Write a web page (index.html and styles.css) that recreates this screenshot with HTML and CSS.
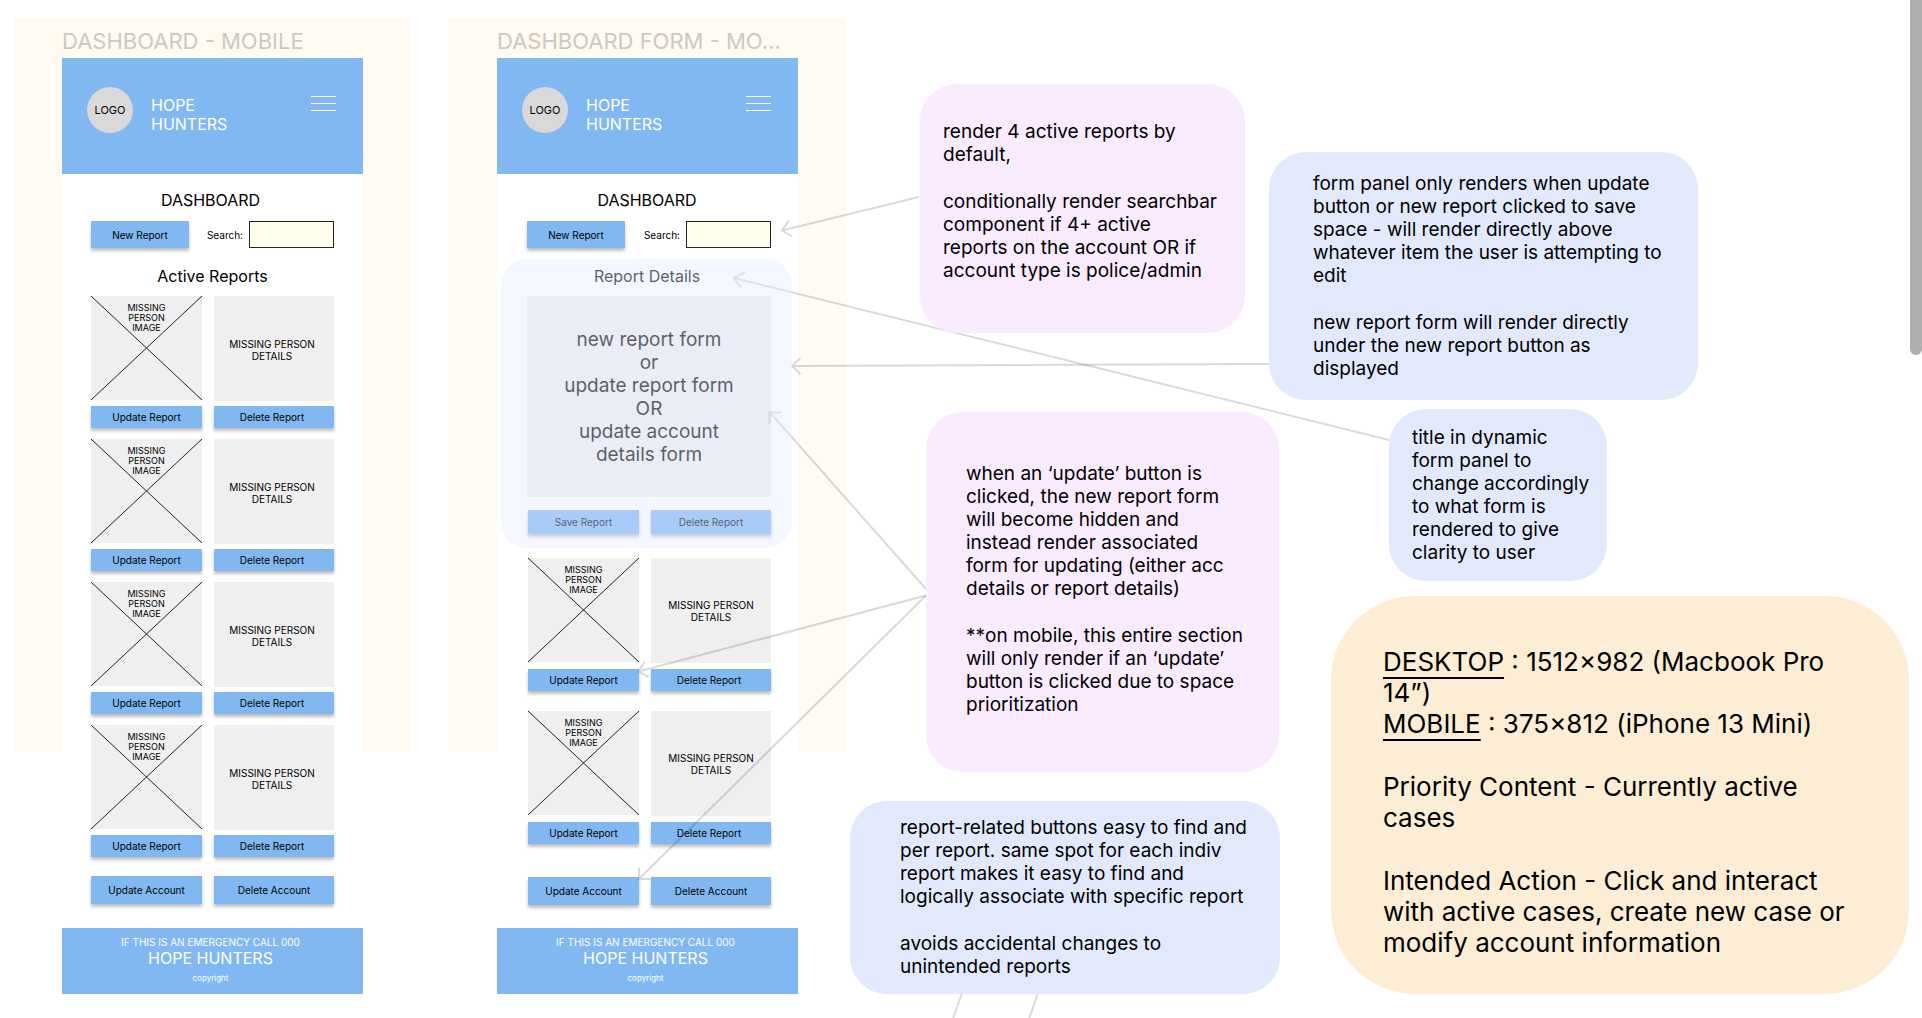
FILE: index.html
```html
<!DOCTYPE html>
<html lang="en">
<head>
<meta charset="utf-8">
<meta name="viewport" content="width=device-width, initial-scale=1">
<title>Hope Hunters wireframes</title>
<link rel="stylesheet" href="styles.css">
</head>
<body>
<main class="canvas">

  <section class="board board-dashboard">
    <h2 class="board-name">DASHBOARD - MOBILE</h2>
    <div class="phone">
      <header class="phone-header">
        <div class="logo">LOGO</div>
        <p class="brand">HOPE<br>HUNTERS</p>
        <button class="menu" type="button" aria-label="Menu"><span></span><span></span><span></span></button>
      </header>
      <div class="phone-body">
        <h3 class="title title-page">DASHBOARD</h3>
        <div class="toolbar">
          <button class="btn btn-new" type="button">New Report</button>
          <label for="search-a">Search:</label>
          <input id="search-a" class="search" type="text">
        </div>
        <h3 class="title title-section">Active Reports</h3>
        <div class="reports">
          <article class="report">
            <div class="photo"><svg viewBox="0 0 111 104" preserveAspectRatio="none" aria-hidden="true"><path d="M0 0L111 104M111 0L0 104"/></svg><p>MISSING<br>PERSON<br>IMAGE</p></div>
            <div class="details">MISSING PERSON<br>DETAILS</div>
            <button class="btn" type="button">Update Report</button>
            <button class="btn btn-right" type="button">Delete Report</button>
          </article>
          <article class="report">
            <div class="photo"><svg viewBox="0 0 111 104" preserveAspectRatio="none" aria-hidden="true"><path d="M0 0L111 104M111 0L0 104"/></svg><p>MISSING<br>PERSON<br>IMAGE</p></div>
            <div class="details">MISSING PERSON<br>DETAILS</div>
            <button class="btn" type="button">Update Report</button>
            <button class="btn btn-right" type="button">Delete Report</button>
          </article>
          <article class="report">
            <div class="photo"><svg viewBox="0 0 111 104" preserveAspectRatio="none" aria-hidden="true"><path d="M0 0L111 104M111 0L0 104"/></svg><p>MISSING<br>PERSON<br>IMAGE</p></div>
            <div class="details">MISSING PERSON<br>DETAILS</div>
            <button class="btn" type="button">Update Report</button>
            <button class="btn btn-right" type="button">Delete Report</button>
          </article>
          <article class="report">
            <div class="photo"><svg viewBox="0 0 111 104" preserveAspectRatio="none" aria-hidden="true"><path d="M0 0L111 104M111 0L0 104"/></svg><p>MISSING<br>PERSON<br>IMAGE</p></div>
            <div class="details">MISSING PERSON<br>DETAILS</div>
            <button class="btn" type="button">Update Report</button>
            <button class="btn btn-right" type="button">Delete Report</button>
          </article>
        </div>
        <div class="account">
          <button class="btn" type="button">Update Account</button>
          <button class="btn" type="button">Delete Account</button>
        </div>
      </div>
      <footer class="phone-footer">
        <p class="emergency">IF THIS IS AN EMERGENCY CALL 000</p>
        <p class="footer-brand">HOPE HUNTERS</p>
        <p class="copyright">copyright</p>
      </footer>
    </div>
  </section>

  <section class="board board-form">
    <h2 class="board-name">DASHBOARD FORM - MO…</h2>
    <div class="phone">
      <header class="phone-header">
        <div class="logo">LOGO</div>
        <p class="brand">HOPE<br>HUNTERS</p>
        <button class="menu" type="button" aria-label="Menu"><span></span><span></span><span></span></button>
      </header>
      <div class="phone-body">
        <h3 class="title title-page">DASHBOARD</h3>
        <div class="toolbar">
          <button class="btn btn-new" type="button">New Report</button>
          <label for="search-b">Search:</label>
          <input id="search-b" class="search" type="text">
        </div>
        <h3 class="title title-section">Report Details</h3>
        <div class="form-area">new report form<br>or<br>update report form<br>OR<br>update account<br>details form</div>
        <div class="form-actions">
          <button class="btn" type="button">Save Report</button>
          <button class="btn" type="button">Delete Report</button>
        </div>
        <div class="reports">
          <article class="report">
            <div class="photo"><svg viewBox="0 0 111 104" preserveAspectRatio="none" aria-hidden="true"><path d="M0 0L111 104M111 0L0 104"/></svg><p>MISSING<br>PERSON<br>IMAGE</p></div>
            <div class="details">MISSING PERSON<br>DETAILS</div>
            <button class="btn" type="button">Update Report</button>
            <button class="btn btn-right" type="button">Delete Report</button>
          </article>
          <article class="report">
            <div class="photo"><svg viewBox="0 0 111 104" preserveAspectRatio="none" aria-hidden="true"><path d="M0 0L111 104M111 0L0 104"/></svg><p>MISSING<br>PERSON<br>IMAGE</p></div>
            <div class="details">MISSING PERSON<br>DETAILS</div>
            <button class="btn" type="button">Update Report</button>
            <button class="btn btn-right" type="button">Delete Report</button>
          </article>
        </div>
        <div class="account">
          <button class="btn" type="button">Update Account</button>
          <button class="btn" type="button">Delete Account</button>
        </div>
      </div>
      <footer class="phone-footer">
        <p class="emergency">IF THIS IS AN EMERGENCY CALL 000</p>
        <p class="footer-brand">HOPE HUNTERS</p>
        <p class="copyright">copyright</p>
      </footer>
    </div>
  </section>

  <svg class="connectors" width="1400" height="1018" aria-hidden="true">
    <path d="M919 197L782 230.500M789 220.500L782 230.500L792 236.500"/>
    <path d="M1389 440L734 278M745 272L734 278L741 287.500"/>
    <path d="M1269 364L792 366M800.500 358L792 366L800.500 374"/>
    <path d="M926 589L769.500 412M781.500 412.700L769.500 412L769.500 423.500"/>
    <path d="M926 595.500L638.500 671.500M644.500 662L638.500 671.500L648.500 677"/>
    <path d="M926 595.500L639 879M639 867.500L639 879L650.500 879"/>
    <path d="M962 993L953 1019"/>
    <path d="M1038 993L1029 1019"/>
  </svg>
  <div class="form-highlight"></div>

  <aside class="note pink note-search">
    <p>render 4 active reports by<br>default,</p>
    <p>conditionally render searchbar<br>component if 4+ active<br>reports on the account OR if<br>account type is police/admin</p>
  </aside>
  <aside class="note blue note-panel">
    <p>form panel only renders when update<br>button or new report clicked to save<br>space - will render directly above<br>whatever item the user is attempting to<br>edit</p>
    <p>new report form will render directly<br>under the new report button as<br>displayed</p>
  </aside>
  <aside class="note blue note-title">
    <p>title in dynamic<br>form panel to<br>change accordingly<br>to what form is<br>rendered to give<br>clarity to user</p>
  </aside>
  <aside class="note pink note-update">
    <p>when an ‘update’ button is<br>clicked, the new report form<br>will become hidden and<br>instead render associated<br>form for updating (either acc<br>details or report details)</p>
    <p>**on mobile, this entire section<br>will only render if an ‘update’<br>button is clicked due to space<br>prioritization</p>
  </aside>
  <aside class="note blue note-buttons">
    <p>report-related buttons easy to find and<br>per report. same spot for each indiv<br>report makes it easy to find and<br>logically associate with specific report</p>
    <p>avoids accidental changes to<br>unintended reports</p>
  </aside>
  <aside class="note orange note-sizes">
    <p><u>DESKTOP</u> : 1512×982 (Macbook Pro<br>14”)<br><u>MOBILE</u> : 375×812 (iPhone 13 Mini)</p>
    <p>Priority Content - Currently active<br>cases</p>
    <p>Intended Action - Click and interact<br>with active cases, create new case or<br>modify account information</p>
  </aside>

  <div class="scroll-thumb"></div>
</main>
</body>
</html>
```
FILE: styles.css
```css
* { box-sizing: border-box; }

body {
  margin: 0;
  background: #fff;
  color: #000;
  font-family: Inter, "Liberation Sans", sans-serif;
}

h2, h3, p { margin: 0; font-weight: 400; }

.canvas {
  position: relative;
  min-height: 100vh;
  overflow: hidden;
}

/* Artboards placed on the free canvas */
.board {
  position: absolute;
  top: 18px;
  display: flex;
  flex-direction: column;
  gap: 3px;
  background: linear-gradient(#fffaf2, #fffaf2) 0 0 / 100% 734px no-repeat;
}
.board-dashboard { left: 14px; width: 397px; padding: 9px 48px 0; }
.board-form { left: 448px; width: 398px; padding: 9px 48px 0 49px; }

.board-name {
  color: #cdc9c2;
  font-size: 22px;
  line-height: 28px;
  white-space: nowrap;
}

.phone { background: #fff; }

.phone-header {
  display: flex;
  align-items: flex-start;
  height: 116px;
  padding: 29px 27px 0 25px;
  background: #81b8f2;
}
.logo {
  display: grid;
  place-items: center;
  width: 46px;
  height: 46px;
  border-radius: 50%;
  background: #d9d9d9;
  font-size: 11px;
}
.brand {
  margin: 9px auto 0 18px;
  color: #fff;
  font-size: 16px;
  line-height: 19px;
}
.menu {
  display: flex;
  flex-direction: column;
  gap: 6px;
  width: 25px;
  margin-top: 9px;
  padding: 0;
  border: 0;
  background: none;
}
.menu span { width: 100%; height: 1px; background: #fff; }

.phone-body {
  display: flex;
  flex-direction: column;
  padding: 17px 29px 24px;
}
.board-form .phone-body { padding: 17px 27px 23px 30px; }

.title {
  font-size: 16px;
  line-height: 19px;
  text-align: center;
}
.title-page, .board-form .title { padding-right: 4px; }
.title-section { margin: 19px 0 10px; }

.toolbar {
  display: flex;
  align-items: center;
  height: 27px;
  margin-top: 11px;
  font-size: 10px;
}
.toolbar label { margin: 0 6px 0 auto; }
.search {
  width: 85px;
  height: 27px;
  padding: 0 4px;
  border: 1px solid #222;
  background: #ffffeb;
}

.btn {
  height: 22px;
  padding: 0;
  border: 0;
  background: #81b8f2;
  box-shadow: 0 3px 3px rgba(0, 0, 0, .25);
  color: #000;
  font: 10px/12px Inter, "Liberation Sans", sans-serif;
}
.btn-new { width: 98px; height: 27px; }
.btn-right { padding-right: 4px; }

.reports { display: grid; gap: 11px; }
.board-form .reports { gap: 20px; margin-top: 24px; }

.report, .account, .form-actions {
  display: grid;
  grid-template-columns: 111px 120px;
  column-gap: 12px;
  row-gap: 5px;
}
.board-form .report { row-gap: 6px; }
.board-form .report,
.board-form .account,
.board-form .form-actions { column-gap: 12px; padding-left: 1px; }

.photo {
  display: grid;
  height: 104px;
  background: #efefef;
}
.photo svg, .photo p { grid-area: 1 / 1; }
.photo svg {
  width: 100%;
  height: 100%;
  fill: none;
  stroke: #222;
}
.photo p {
  padding-top: 7px;
  font-size: 9px;
  line-height: 10px;
  text-align: center;
}
.details {
  display: grid;
  place-items: center;
  height: 105px;
  padding: 2px 4px 0 0;
  background: #efefef;
  font-size: 10px;
  line-height: 12px;
  text-align: center;
}
.board-form .details { padding: 0; }

.account { margin-top: 19px; }
.board-form .account { margin-top: 33px; }
.account .btn { height: 28px; }

.form-area {
  display: grid;
  place-items: center;
  height: 201px;
  background: #efefef;
  font-size: 19px;
  line-height: 23px;
  text-align: center;
}
.form-actions { margin-top: 13px; }
.form-actions .btn { height: 24px; }

.phone-footer {
  height: 66px;
  padding: 8px 4px 0 0;
  background: #81b8f2;
  color: #fff;
  text-align: center;
}
.emergency { font-size: 10px; line-height: 12px; }
.footer-brand { font-size: 16px; line-height: 20px; }
.copyright { padding-top: 5px; font-size: 8px; line-height: 10px; }

/* Arrows between the notes and the artboards */
.connectors {
  position: absolute;
  top: 0;
  left: 0;
  fill: none;
  stroke: rgba(0, 0, 0, .15);
  stroke-width: 2;
  pointer-events: none;
}
.form-highlight {
  position: absolute;
  top: 259px;
  left: 501px;
  width: 291px;
  height: 289px;
  border-radius: 26px;
  background: rgba(228, 235, 255, .4);
  pointer-events: none;
}

/* Notes pinned on the canvas */
.note {
  position: absolute;
  border-radius: 37px;
  font-size: 19px;
  line-height: 23px;
  white-space: nowrap;
}
.note p + p { margin-top: 24px; }
.pink { background: #faebff; }
.blue { background: #e3e9fd; }
.orange { background: #fcedd4; }

.note-search { top: 84px; left: 920px; width: 325px; height: 249px; padding: 36px 23px; }
.note-panel { top: 152px; left: 1269px; width: 429px; height: 248px; padding: 20px 44px; }
.note-title { top: 409px; left: 1389px; width: 218px; height: 172px; padding: 17px 23px; }
.note-update { top: 412px; left: 926px; width: 353px; height: 360px; padding: 50px 40px; }
.note-buttons { top: 801px; left: 850px; width: 430px; height: 193px; padding: 15px 50px; }
.note-sizes {
  top: 596px;
  left: 1331px;
  width: 578px;
  height: 398px;
  padding: 50px 52px;
  border-radius: 84px;
  font-size: 26px;
  line-height: 31px;
}
.note-sizes p + p { margin-top: 32px; }
.note-sizes u { text-decoration-thickness: 2px; text-underline-offset: 6px; }

.scroll-thumb {
  position: absolute;
  top: 0;
  right: 0;
  width: 12px;
  height: 355px;
  border-radius: 0 0 6px 6px;
  background: #afafaf;
}
```
